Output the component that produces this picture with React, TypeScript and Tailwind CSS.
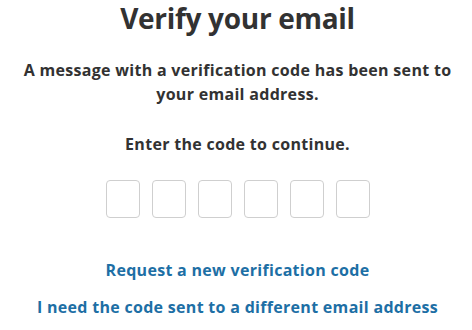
import React from "react";

export default function App() {
  return (
    <div
      className="w-[472px] h-[330px] bg-white flex flex-col items-center pl-[3px] text-[#323232]"
      style={{ fontFamily: '"Open Sans", "Noto Sans", sans-serif' }}
    >
      <h1 className="text-[28px] leading-[36px] font-bold tracking-[-0.3px]">Verify your email</h1>
      <p className="mt-[22px] text-[16px] leading-[24px] font-bold tracking-[0.3px] text-center">
        A message with a verification code has been sent to
        <br />
        your email address.
      </p>
      <p className="mt-[26px] text-[16px] leading-[24px] font-bold tracking-[0.3px]">Enter the code to continue.</p>
      <div className="mt-[24px] flex gap-[12px]">
        {[0, 1, 2, 3, 4, 5].map((i) => (
          <input
            key={i}
            aria-label={`Digit ${i + 1}`}
            className="w-[34px] h-[38px] border border-[#cfcfcf] rounded-[4px] bg-white text-center outline-none"
            maxLength={1}
          />
        ))}
      </div>
      <a href="#" className="mt-[40px] text-[16px] leading-[24px] font-bold tracking-[0.3px] text-[#1d6fa5]">
        Request a new verification code
      </a>
      <a href="#" className="mt-[13px] text-[16px] leading-[24px] font-bold tracking-[0.3px] text-[#1d6fa5]">
        I need the code sent to a different email address
      </a>
    </div>
  );
}
